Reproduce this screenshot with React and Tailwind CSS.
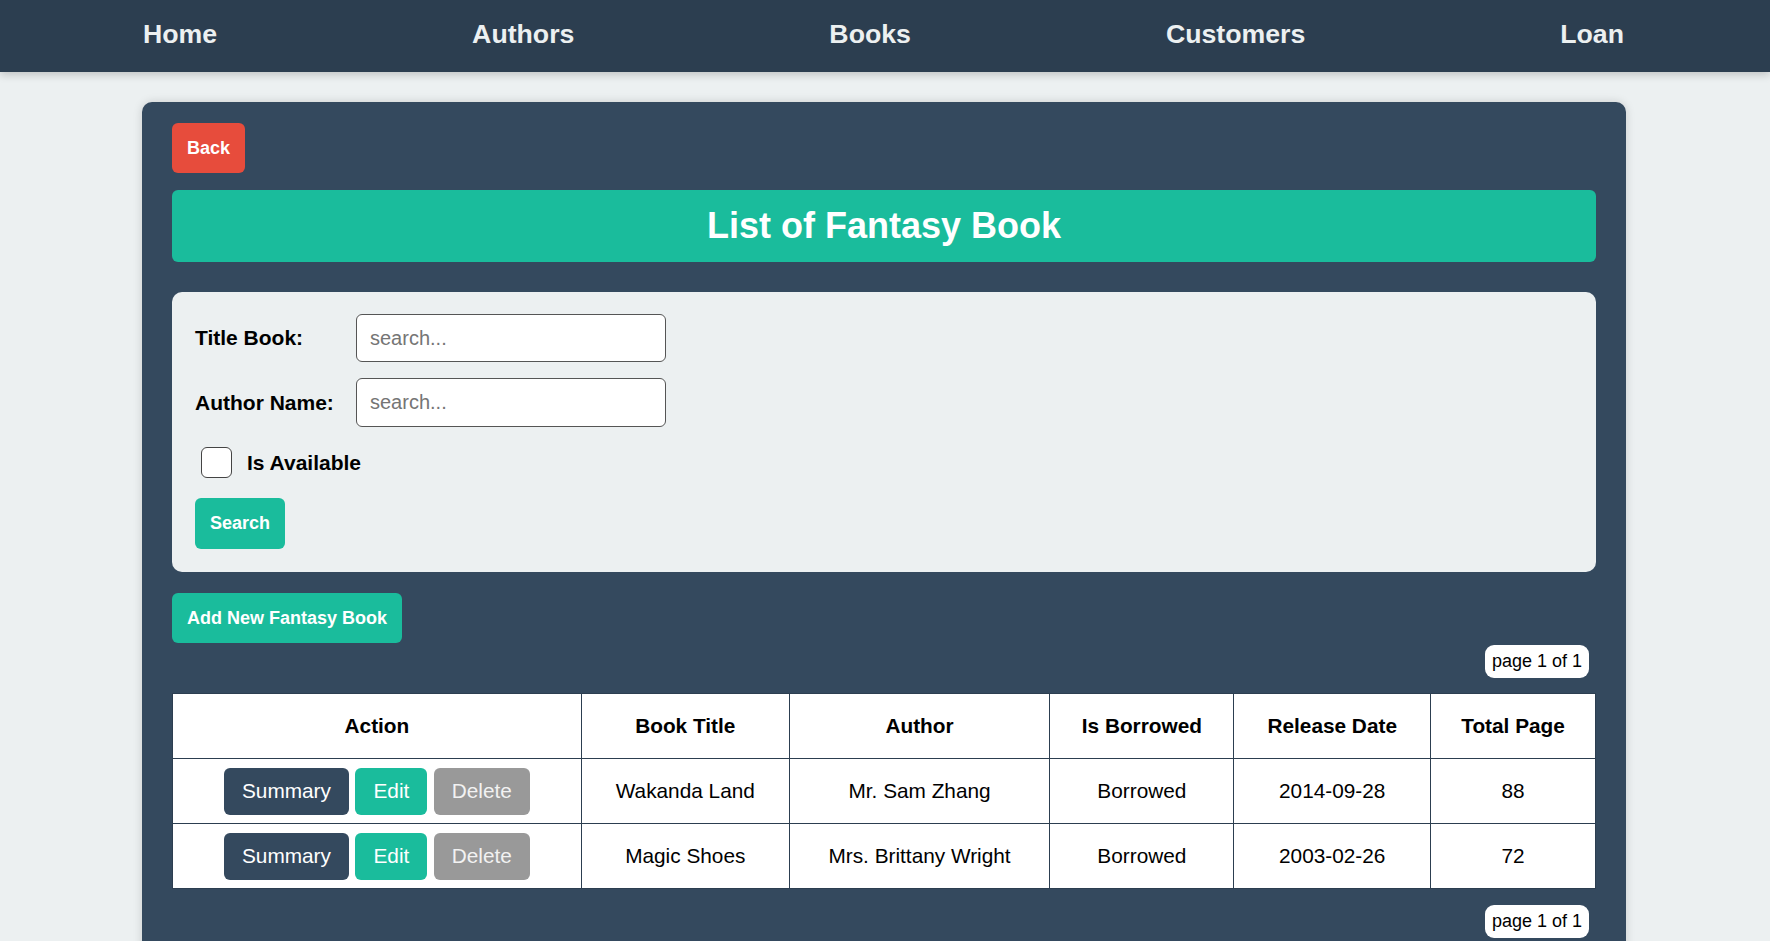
import React from 'react';

const navLinks = ['Home', 'Authors', 'Books', 'Customers', 'Loan'];

const books = [
  { title: 'Wakanda Land', author: 'Mr. Sam Zhang', status: 'Borrowed', date: '2014-09-28', pages: 88 },
  { title: 'Magic Shoes', author: 'Mrs. Brittany Wright', status: 'Borrowed', date: '2003-02-26', pages: 72 },
];

const columns = [
  { label: 'Action', width: 'w-[409px]' },
  { label: 'Book Title', width: 'w-[208px]' },
  { label: 'Author', width: 'w-[261px]' },
  { label: 'Is Borrowed', width: 'w-[184px]' },
  { label: 'Release Date', width: 'w-[197px]' },
  { label: 'Total Page', width: 'w-[165px]' },
];

function PageInfo({ className }) {
  return (
    <div className={`flex justify-end pr-[7px] ${className}`}>
      <span className="h-[33px] flex items-center bg-white text-black text-[18px] px-[7px] rounded-[9px]">
        page 1 of 1
      </span>
    </div>
  );
}

export default function App() {
  return (
    <div className="min-h-screen bg-[#ecf0f1] font-['Liberation_Sans',Arial,sans-serif]">
      {/* Top navigation */}
      <nav className="h-[72px] bg-[#2c3e50] flex items-center justify-between pl-[143px] pr-[146px] pb-[4px] shadow-[0_3px_8px_rgba(0,0,0,0.18)]">
        {navLinks.map((link) => (
          <a key={link} href="#" className="text-[#ecf0f1] text-[26.7px] font-bold">
            {link}
          </a>
        ))}
      </nav>

      <main className="pt-[30px]">
        <div className="w-[1484px] ml-[142px] bg-[#34495e] rounded-[10px] pl-[30px] pr-[30px] pt-[21px] pb-[40px] shadow-[0_0_10px_rgba(0,0,0,0.15)]">
          <button className="bg-[#e74c3c] text-white font-bold text-[18px] leading-[20px] px-[15px] py-[15px] rounded-[6px]">
            Back
          </button>

          <div className="mt-[17px] h-[72px] bg-[#1abc9c] rounded-[6px] flex items-center justify-center">
            <h1 className="text-white font-bold text-[36px]">List of Fantasy Book</h1>
          </div>

          {/* Filter panel */}
          <div className="mt-[30px] bg-[#ecf0f1] rounded-[10px] pl-[23px] pt-[22px] pb-[23px]">
            <div className="flex items-center">
              <label className="w-[161px] text-[21px] font-bold text-black">Title Book:</label>
              <input
                placeholder="search..."
                className="w-[310px] h-[48px] bg-white border border-[#555] rounded-[6px] px-[13px] text-[20px] placeholder:text-[#757575] outline-none"
              />
            </div>
            <div className="flex items-center mt-[16px]">
              <label className="w-[161px] text-[21px] font-bold text-black">Author Name:</label>
              <input
                placeholder="search..."
                className="w-[310px] h-[49px] bg-white border border-[#555] rounded-[6px] px-[13px] text-[20px] placeholder:text-[#757575] outline-none"
              />
            </div>
            <div className="flex items-center mt-[20px] ml-[6px] h-[31px]">
              <input
                type="checkbox"
                className="appearance-none w-[31px] h-[31px] bg-white border border-[#444] rounded-[6px]"
              />
              <span className="ml-[15px] text-[21px] font-bold text-black">Is Available</span>
            </div>
            <button className="mt-[20px] bg-[#1abc9c] text-white font-bold text-[18px] leading-[21px] px-[15px] py-[15px] rounded-[6px]">
              Search
            </button>
          </div>

          <button className="mt-[21px] bg-[#1abc9c] text-white font-bold text-[18px] leading-[20px] px-[15px] py-[15px] rounded-[6px]">
            Add New Fantasy Book
          </button>

          <PageInfo className="mt-[2px]" />

          {/* Books table */}
          <table className="mt-[15px] w-full bg-white border-collapse text-black">
            <thead>
              <tr className="h-[65px]">
                {columns.map((c) => (
                  <th key={c.label} className={`${c.width} border border-[#2c3e50] text-[20.8px] font-bold`}>
                    {c.label}
                  </th>
                ))}
              </tr>
            </thead>
            <tbody>
              {books.map((b) => (
                <tr key={b.title} className="h-[65px] text-[20.8px] text-center">
                  <td className="border border-[#2c3e50]">
                    <div className="flex justify-center gap-[6.5px]">
                      <button className="h-[47px] px-[18px] bg-[#34495e] text-white rounded-[6px]">Summary</button>
                      <button className="h-[47px] px-[18px] bg-[#1abc9c] text-white rounded-[6px]">Edit</button>
                      <button className="h-[47px] px-[18px] bg-[#999999] text-[#f2f2f2] rounded-[6px]">Delete</button>
                    </div>
                  </td>
                  <td className="border border-[#2c3e50]">{b.title}</td>
                  <td className="border border-[#2c3e50]">{b.author}</td>
                  <td className="border border-[#2c3e50]">{b.status}</td>
                  <td className="border border-[#2c3e50]">{b.date}</td>
                  <td className="border border-[#2c3e50]">{b.pages}</td>
                </tr>
              ))}
            </tbody>
          </table>

          <PageInfo className="mt-[16px]" />
        </div>
      </main>
    </div>
  );
}
